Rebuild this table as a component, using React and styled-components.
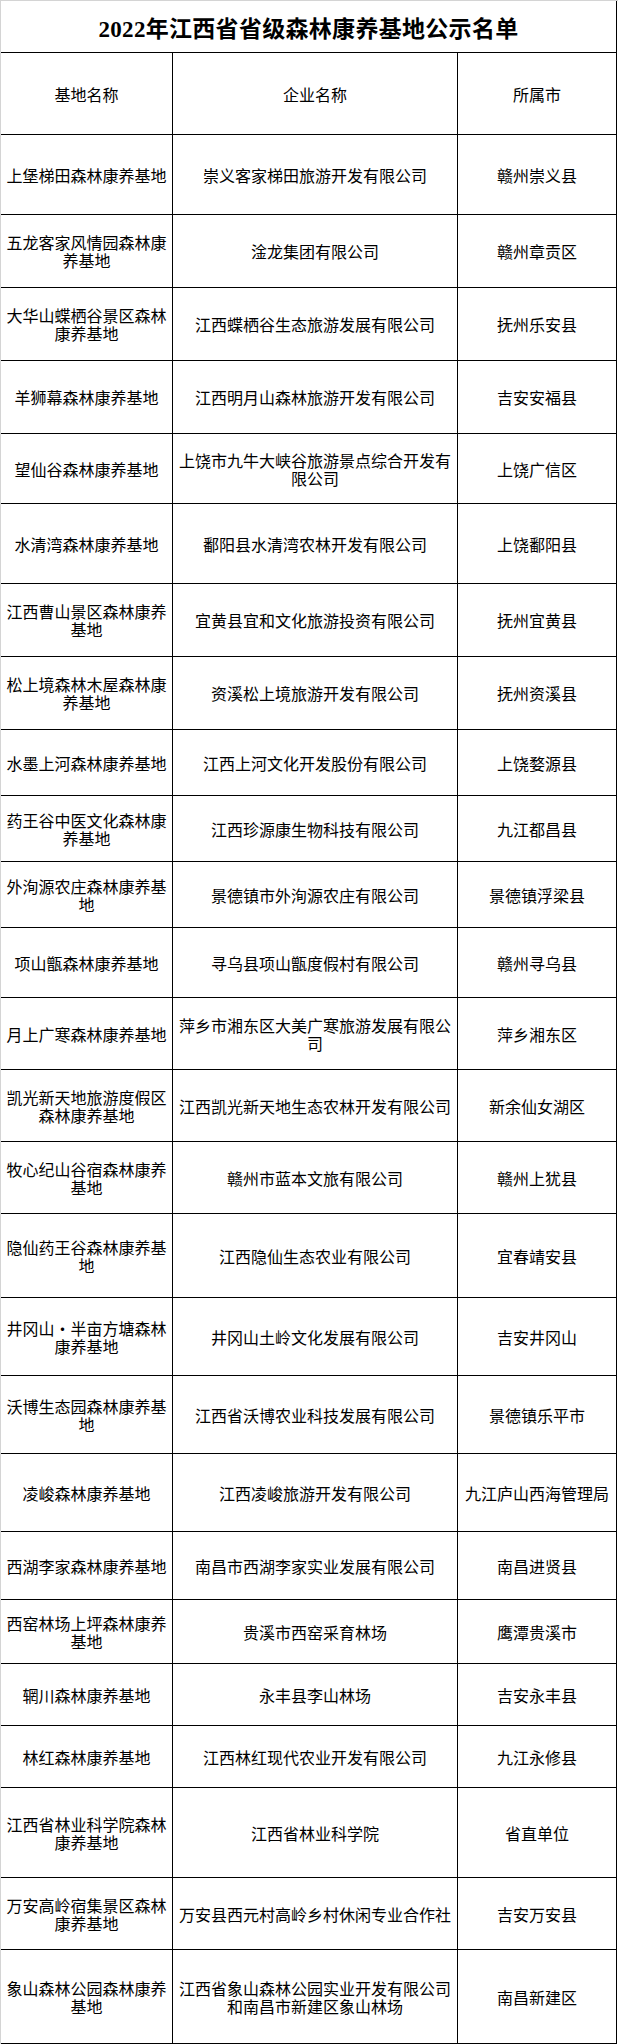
import styled, { createGlobalStyle } from "styled-components";

const GlobalStyle = createGlobalStyle`
  html, body {
    margin: 0;
    padding: 0;
    background: #fff;
  }
  body {
    font-family: "Noto Sans CJK SC", "Liberation Sans", sans-serif;
    color: #000;
  }
`;

const Page = styled.div`
  width: 618px;
  box-sizing: border-box;
  border-left: 1px solid #d4d4d4;
  border-top: 1px solid #d4d4d4;
`;

const Title = styled.h1`
  margin: 0;
  width: 616px;
  height: 52px;
  box-sizing: border-box;
  border-right: 1px solid #000;
  border-bottom: 1px solid #000;
  display: flex;
  align-items: center;
  justify-content: center;
  font-family: "Liberation Serif", "Noto Sans CJK SC", serif;
  font-size: 23px;
  font-weight: 700;
  letter-spacing: 0.3px;
`;

const Sheet = styled.div`
  width: 616px;
  display: flex;
  flex-direction: column;
`;

const Row = styled.div`
  display: grid;
  grid-template-columns: 172px 285px 159px;
  height: ${(p) => p.$h}px;
  box-sizing: border-box;
  border-bottom: 1px solid #000;
`;

const Cell = styled.div`
  display: flex;
  align-items: center;
  justify-content: center;
  text-align: center;
  border-right: 1px solid #000;
  font-size: 16px;
  line-height: 18px;
  padding: 0 1px;
  overflow: hidden;
`;

const rows = [
  ["上堡梯田森林康养基地", "崇义客家梯田旅游开发有限公司", "赣州崇义县", 80],
  ["五龙客家风情园森林康养基地", "淦龙集团有限公司", "赣州章贡区", 73],
  ["大华山蝶栖谷景区森林康养基地", "江西蝶栖谷生态旅游发展有限公司", "抚州乐安县", 73],
  ["羊狮幕森林康养基地", "江西明月山森林旅游开发有限公司", "吉安安福县", 73],
  ["望仙谷森林康养基地", "上饶市九牛大峡谷旅游景点综合开发有限公司", "上饶广信区", 70],
  ["水清湾森林康养基地", "鄱阳县水清湾农林开发有限公司", "上饶鄱阳县", 80],
  ["江西曹山景区森林康养基地", "宜黄县宜和文化旅游投资有限公司", "抚州宜黄县", 73],
  ["松上境森林木屋森林康养基地", "资溪松上境旅游开发有限公司", "抚州资溪县", 73],
  ["水墨上河森林康养基地", "江西上河文化开发股份有限公司", "上饶婺源县", 66],
  ["药王谷中医文化森林康养基地", "江西珍源康生物科技有限公司", "九江都昌县", 66],
  ["外洵源农庄森林康养基地", "景德镇市外洵源农庄有限公司", "景德镇浮梁县", 66],
  ["项山甑森林康养基地", "寻乌县项山甑度假村有限公司", "赣州寻乌县", 70],
  ["月上广寒森林康养基地", "萍乡市湘东区大美广寒旅游发展有限公司", "萍乡湘东区", 72],
  ["凯光新天地旅游度假区森林康养基地", "江西凯光新天地生态农林开发有限公司", "新余仙女湖区", 72],
  ["牧心纪山谷宿森林康养基地", "赣州市蓝本文旅有限公司", "赣州上犹县", 72],
  ["隐仙药王谷森林康养基地", "江西隐仙生态农业有限公司", "宜春靖安县", 84],
  ["井冈山・半亩方塘森林康养基地", "井冈山土岭文化发展有限公司", "吉安井冈山", 78],
  ["沃博生态园森林康养基地", "江西省沃博农业科技发展有限公司", "景德镇乐平市", 78],
  ["凌峻森林康养基地", "江西凌峻旅游开发有限公司", "九江庐山西海管理局", 78],
  ["西湖李家森林康养基地", "南昌市西湖李家实业发展有限公司", "南昌进贤县", 68],
  ["西窑林场上坪森林康养基地", "贵溪市西窑采育林场", "鹰潭贵溪市", 64],
  ["辋川森林康养基地", "永丰县李山林场", "吉安永丰县", 62],
  ["林红森林康养基地", "江西林红现代农业开发有限公司", "九江永修县", 62],
  ["江西省林业科学院森林康养基地", "江西省林业科学院", "省直单位", 90],
  ["万安高岭宿集景区森林康养基地", "万安县西元村高岭乡村休闲专业合作社", "吉安万安县", 72],
  ["象山森林公园森林康养基地", "江西省象山森林公园实业开发有限公司和南昌市新建区象山林场", "南昌新建区", 94],
];

export default function App() {
  return (
    <>
      <GlobalStyle />
      <Page>
        <Title>2022年江西省省级森林康养基地公示名单</Title>
        <Sheet>
          <Row $h={82}>
            <Cell>基地名称</Cell>
            <Cell>企业名称</Cell>
            <Cell>所属市</Cell>
          </Row>
          {rows.map(([base, company, city, h]) => (
            <Row key={base} $h={h}>
              <Cell>{base}</Cell>
              <Cell>{company}</Cell>
              <Cell>{city}</Cell>
            </Row>
          ))}
        </Sheet>
      </Page>
    </>
  );
}
